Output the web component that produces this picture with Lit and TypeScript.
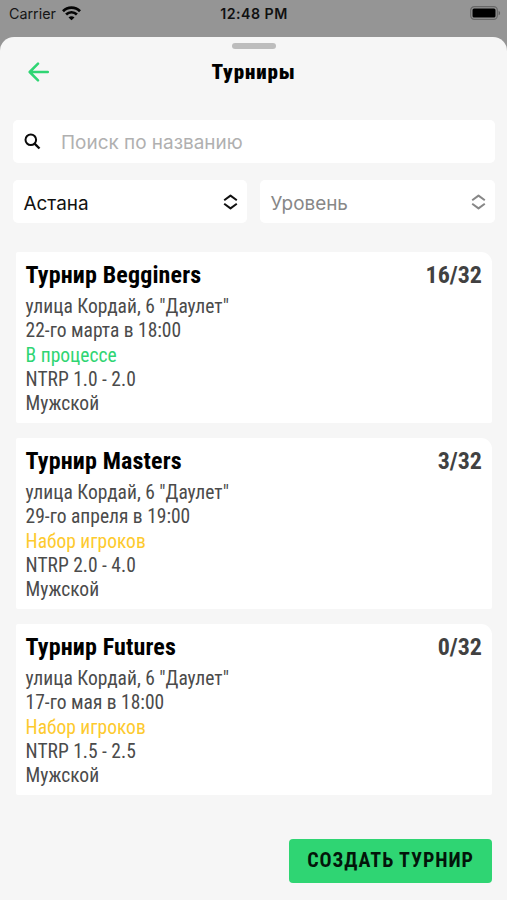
import { LitElement, html, css } from "lit";
import { customElement, property } from "lit/decorators.js";

interface Tournament {
  name: string;
  players: string;
  date: string;
  status: string;
  active: boolean;
  level: string;
}

const TOURNAMENTS: Tournament[] = [
  { name: "Турнир Begginers", players: "16/32", date: "22-го марта в 18:00", status: "В процессе", active: true, level: "NTRP 1.0 - 2.0" },
  { name: "Турнир Masters", players: "3/32", date: "29-го апреля в 19:00", status: "Набор игроков", active: false, level: "NTRP 2.0 - 4.0" },
  { name: "Турнир Futures", players: "0/32", date: "17-го мая в 18:00", status: "Набор игроков", active: false, level: "NTRP 1.5 - 2.5" },
];

@customElement("status-bar")
export class StatusBar extends LitElement {
  static styles = css`
    :host { display: grid; grid-template-columns: 1fr auto 1fr; align-items: center; height: 27px; padding: 0 6px 0 9px; font: 400 14px/20px Inter, sans-serif; color: #161616; }
    .carrier { display: flex; align-items: center; gap: 6px; font-size: 14.3px; }
    .time { font-weight: 600; font-size: 14.2px; letter-spacing: 0.5px; margin-right: 2px; color: #111; }
    .battery { justify-self: end; }
    svg { display: block; margin-top: -1px; }
  `;
  render() {
    return html`
      <div class="carrier"><span>Carrier</span>
        <svg width="19" height="15" viewBox="0 0 19 15" fill="none" stroke="#050505" stroke-width="2.7">
          <path d="M1 5.2C5.7.4 13.3.4 18 5.2" />
          <path d="M4.1 8.5c3-3 7.8-3 10.8 0" />
          <path d="M9.5 14.3 6.5 11.4c1.7-1.6 4.3-1.6 6 0z" fill="#050505" stroke="none" />
        </svg>
      </div>
      <span class="time">12:48 PM</span>
      <svg class="battery" width="31" height="14" viewBox="0 0 31 14">
        <rect x=".7" y=".7" width="26.6" height="12.6" rx="3.6" fill="none" stroke="#686868" stroke-width="1.2" />
        <rect x="2.5" y="2.5" width="23" height="9" rx="1.5" fill="#000" />
        <path d="M28.6 4.7c2 .9 2 3.7 0 4.6z" fill="#5f5f5f" />
      </svg>`;
  }
}

@customElement("select-field")
export class SelectField extends LitElement {
  @property() label = "";
  static styles = css`
    :host { display: flex; align-items: center; justify-content: space-between; box-sizing: border-box; height: 43px; padding: 2px 9px 0 10.5px; border-radius: 5px; background: #fff; font: 400 18.9px/26px Inter, sans-serif; }
    span { padding-top: 1.5px; }
    svg { display: block; margin-top: -2px; }
  `;
  render() {
    return html`<span>${this.label}</span>
      <svg width="15" height="16" viewBox="0 0 15 16" fill="none" stroke="currentColor" stroke-width="2" stroke-linejoin="round">
        <path d="M1.2 6.2 7.5 1.6l6.3 4.6M1.2 9.8l6.3 4.6 6.3-4.6" />
      </svg>`;
  }
}

@customElement("tournament-card")
export class TournamentCard extends LitElement {
  @property({ attribute: false }) item!: Tournament;
  static styles = css`
    :host { display: block; box-sizing: border-box; height: 171px; padding: 8px 10px 0 9.6px; background: #fff; border-radius: 2px 11px 2px 2px; font: 400 19.5px/24.4px "Roboto Condensed", Roboto, sans-serif; font-stretch: 75%; color: #4b4b4b; }
    .head { display: flex; justify-content: space-between; font-size: 24px; line-height: 30px; font-weight: 700; margin-bottom: 4.3px; }
    .name { color: #000; letter-spacing: 0.15px; }
    .players { color: #414141; }
    .active { color: #2fd573; }
    .open { color: #fdca2e; }
  `;
  render() {
    const t = this.item;
    return html`
      <div class="head"><span class="name">${t.name}</span><span class="players">${t.players}</span></div>
      <div>улица Кордай, 6 "Даулет"</div>
      <div>${t.date}</div>
      <div class=${t.active ? "active" : "open"}>${t.status}</div>
      <div>${t.level}</div>
      <div>Мужской</div>`;
  }
}

@customElement("app-root")
export class AppRoot extends LitElement {
  static styles = css`
    :host { display: flex; flex-direction: column; box-sizing: border-box; height: 900px; background: #959595; overflow: hidden; }
    .sheet { flex: 1; display: flex; flex-direction: column; margin-top: 10.4px; background: #f6f6f6; border-radius: 14px 14px 0 0; }
    .grip { align-self: center; width: 44px; height: 6px; margin-top: 6px; border-radius: 3px; background: #bdbdbd; }
    header { display: grid; grid-template-columns: 1fr auto 1fr; align-items: center; height: 45px; padding: 0 28px; }
    h1 { margin: 1px 0 0; font: 900 21px/28px "Roboto Condensed", Roboto, sans-serif; font-stretch: 75%; letter-spacing: 0.9px; color: #000; }
    svg { display: block; }
    .search { display: flex; align-items: center; height: 43px; margin: 26px 12px 0 13px; padding-left: 11px; box-sizing: border-box; gap: 20px; border-radius: 5px; background: #fff; font: 400 18.95px/26px Inter, sans-serif; color: #b0b0b0; }
    .search span { padding-top: 1.5px; }
    .filters { display: grid; grid-template-columns: 234px 235px; justify-content: space-between; margin: 17px 12px 0 13px; }
    .chosen { color: #111; }
    .empty { color: #878787; }
    .list { display: flex; flex-direction: column; gap: 15px; margin: 29px 15px 0 16px; }
    .create { align-self: flex-end; width: 203px; height: 44px; margin: 43.6px 15px 0 0; padding: 0 0 2px; border: 0; border-radius: 4px; background: #2fd573; color: #03150a; font: 700 20px/42px "Roboto Condensed", Roboto, sans-serif; font-stretch: 75%; letter-spacing: 0.95px; }
  `;
  render() {
    return html`
      <status-bar></status-bar>
      <div class="sheet">
        <div class="grip"></div>
        <header>
          <svg width="22" height="20" viewBox="0 0 22 20" fill="none" stroke="#2fd573" stroke-width="2.5" stroke-linecap="round" stroke-linejoin="round">
            <path d="M10 1.7 1.7 10l8.3 8.3M2 10h17.8" />
          </svg>
          <h1>Турниры</h1>
        </header>
        <div class="search">
          <svg width="17" height="17" viewBox="0 0 17 17" fill="none" stroke="#0a0a0a" stroke-width="2">
            <circle cx="6.8" cy="6.8" r="5.3" /><path d="m10.6 10.6 4.9 4.9" stroke-width="2.3" />
          </svg>
          <span>Поиск по названию</span>
        </div>
        <div class="filters">
          <select-field class="chosen" label="Астана"></select-field>
          <select-field class="empty" label="Уровень"></select-field>
        </div>
        <div class="list">${TOURNAMENTS.map((t) => html`<tournament-card .item=${t}></tournament-card>`)}</div>
        <button class="create">СОЗДАТЬ ТУРНИР</button>
      </div>`;
  }
}
